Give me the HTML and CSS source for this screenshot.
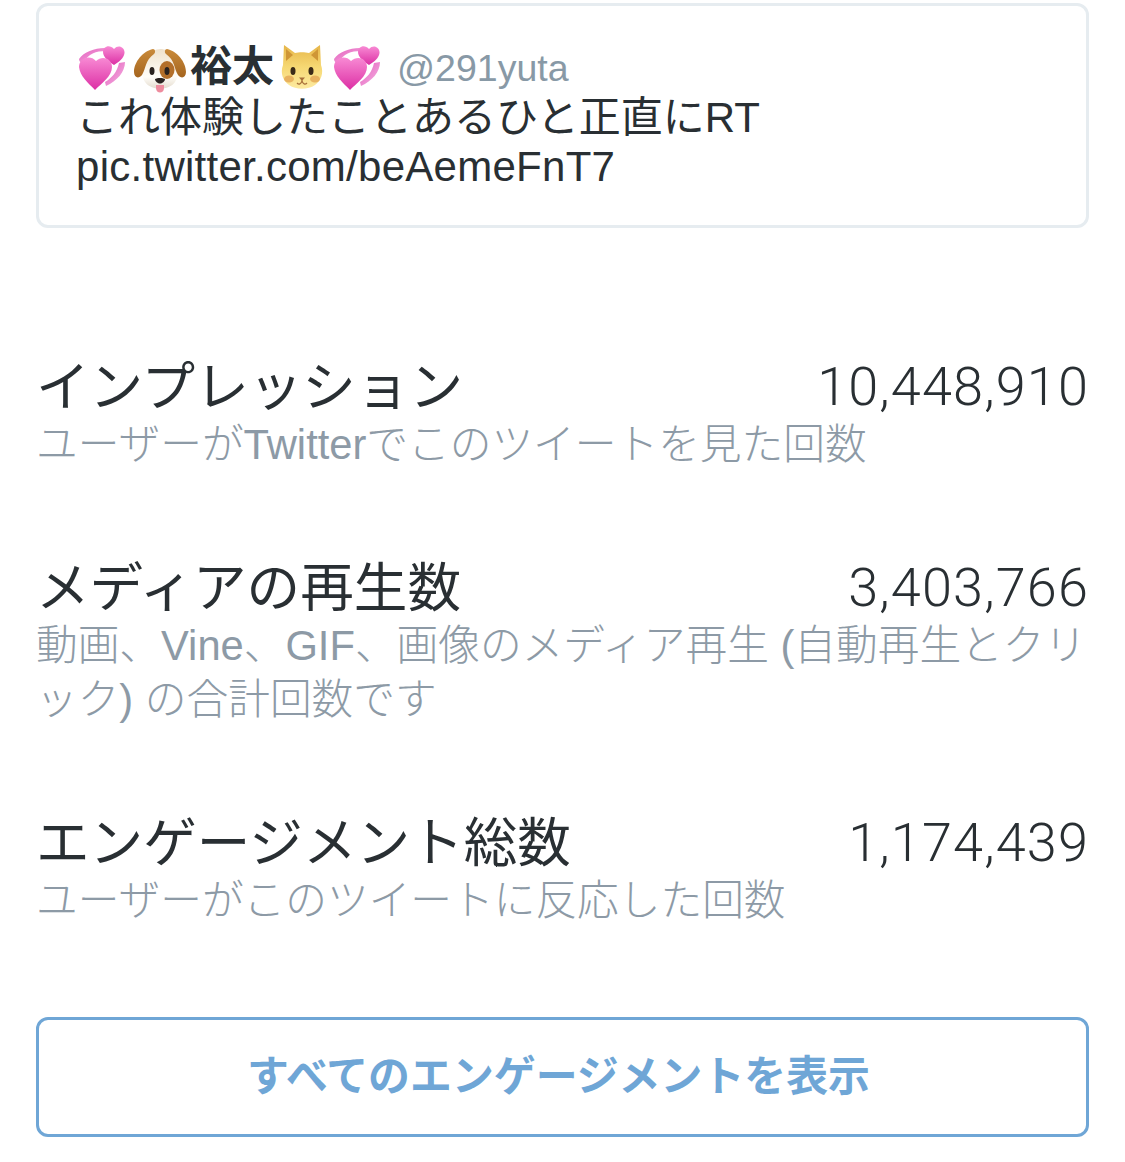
FILE: index.html
```html
<!DOCTYPE html>
<html lang="ja">
<head>
  <meta charset="UTF-8">
  <title>ツイートアクティビティ</title>
  <link rel="stylesheet" href="styles.css">
</head>
<body>
  <svg class="defs" width="0" height="0">
    <defs>
      <linearGradient id="pink" x1="0" y1="0" x2="0" y2="1">
        <stop offset="0" stop-color="#f88ad4"/>
        <stop offset="1" stop-color="#dc2fa4"/>
      </linearGradient>
      <linearGradient id="ribbon" x1="0" y1="0" x2="1" y2="1">
        <stop offset="0" stop-color="#e45cbb"/>
        <stop offset="1" stop-color="#f5b5e4"/>
      </linearGradient>
      <linearGradient id="catfur" x1="0" y1="0" x2="0" y2="1">
        <stop offset="0" stop-color="#e6b548"/>
        <stop offset="0.5" stop-color="#f6d873"/>
        <stop offset="1" stop-color="#fdeaa0"/>
      </linearGradient>
      <linearGradient id="dogfur" x1="0" y1="0" x2="0" y2="1">
        <stop offset="0" stop-color="#efe2cd"/>
        <stop offset="0.7" stop-color="#fffdf8"/>
        <stop offset="1" stop-color="#e4dccf"/>
      </linearGradient>
      <linearGradient id="ear" x1="0" y1="0" x2="0" y2="1">
        <stop offset="0" stop-color="#c98a3a"/>
        <stop offset="1" stop-color="#a5651f"/>
      </linearGradient>
      <symbol id="hearts" viewBox="0 0 46 46">
        <path d="M0 14C5 7 15 3 26 3L27 6C17 6 9 9 5 17C3 19 0 17 0 14Z" fill="url(#ribbon)"/>
        <path d="M46 17C46 27 38 36 27 41L26 37C33 33 38 27 40 18Z" fill="url(#ribbon)"/>
        <path d="M35 20C29 16 24 12 24 7C24 1 31 -1 35 4C39 -1 46 2 45.500 8C45 13 40 17 35 20Z" fill="url(#pink)"/>
        <path d="M16 45C9 38 1 31 0 22C0 13 11 9 17 16C23 10 33 13 33 22C33 31 23 38 16 45Z" fill="url(#pink)"/>
      </symbol>
      <symbol id="dog" viewBox="0 0 52 44">
        <path d="M14 6C20 -2 33 -2 38 6C45 15 46 26 41 33C35 42 17 42 11 33C6 26 7 15 14 6Z" fill="url(#dogfur)"/>
        <path d="M19 0C9 2 0 13 0 23C0 29 5 30 8 26C12 20 11 11 20 5C22 3 21 0 19 0Z" fill="url(#ear)"/>
        <path d="M33 0C43 2 52 13 52 23C52 29 47 30 44 26C40 20 41 11 32 5C30 3 31 0 33 0Z" fill="url(#ear)"/>
        <ellipse cx="33" cy="21" rx="7.500" ry="9" fill="#b36f2a"/>
        <ellipse cx="18" cy="22" rx="2.500" ry="4" fill="#2a2320"/>
        <ellipse cx="33" cy="22" rx="2.500" ry="4" fill="#2a2320"/>
        <path d="M21 30C23 28.500 29 28.500 31 30C31 32.500 28 34.500 26 34.500C24 34.500 21 32.500 21 30Z" fill="#2a2320"/>
        <path d="M22 36H30V39C30 45 22 45 22 39Z" fill="#ee8c9e"/>
      </symbol>
      <symbol id="cat" viewBox="0 0 44 46">
        <path d="M4 0L15 8C19 7 25 7 29 8L40 0L41 20C44 28 41 36 35 40C28 45 16 45 9 40C3 36 0 28 3 20Z" fill="url(#catfur)"/>
        <path d="M6 4L13 10L6 16Z" fill="#cf9636"/>
        <path d="M38 4L31 10L38 16Z" fill="#cf9636"/>
        <ellipse cx="9" cy="34" rx="5" ry="3.500" fill="#e8b25f"/>
        <ellipse cx="35" cy="34" rx="5" ry="3.500" fill="#e8b25f"/>
        <ellipse cx="13" cy="26" rx="2.500" ry="4" fill="#3a2a18"/>
        <ellipse cx="31" cy="26" rx="2.500" ry="4" fill="#3a2a18"/>
        <path d="M19 32.500H25L22 36Z" fill="#a8703a"/>
        <path d="M17 38C19 40 21 39 22 36C23 39 25 40 27 38" fill="none" stroke="#a8703a" stroke-width="1.200"/>
      </symbol>
    </defs>
  </svg>

  <div class="tweet">
    <div class="tweet-head">
      <svg class="emoji"><use href="#hearts"/></svg>
      <svg class="emoji dog"><use href="#dog"/></svg>
      <strong class="name">裕太</strong>
      <svg class="emoji cat"><use href="#cat"/></svg>
      <svg class="emoji"><use href="#hearts"/></svg>
      <span class="handle">@291yuta</span>
    </div>
    <p class="tweet-text">これ体験したことあるひと正直にRT<br><span class="tweet-link">pic.twitter.com/beAemeFnT7</span></p>
  </div>

  <div class="metric metric-first">
    <div class="metric-row">
      <span class="metric-title">インプレッション</span>
      <span class="metric-value">10,448,910</span>
    </div>
    <p class="metric-desc">ユーザーがTwitterでこのツイートを見た回数</p>
  </div>

  <div class="metric metric-second">
    <div class="metric-row">
      <span class="metric-title">メディアの再生数</span>
      <span class="metric-value">3,403,766</span>
    </div>
    <p class="metric-desc">動画、Vine、GIF、画像のメディア再生 (自動再生とクリック) の合計回数です</p>
  </div>

  <div class="metric metric-third">
    <div class="metric-row">
      <span class="metric-title">エンゲージメント総数</span>
      <span class="metric-value">1,174,439</span>
    </div>
    <p class="metric-desc">ユーザーがこのツイートに反応した回数</p>
  </div>

  <a class="button">すべてのエンゲージメントを表示</a>
</body>
</html>
```

FILE: styles.css
```css
body {
  margin: 0;
  padding: 3px 36px 0;
  background: #ffffff;
  color: #292f33;
  font-family: "Liberation Sans", "Noto Sans CJK JP", sans-serif;
}
.defs {
  position: absolute;
}
.tweet {
  box-sizing: border-box;
  height: 225px;
  padding: 37px 37px 0;
  border: 3px solid #e6ecf0;
  border-radius: 12px;
}
.tweet-head {
  display: flex;
  align-items: center;
  height: 50px;
}
.emoji {
  flex: none;
  width: 46px;
  height: 46px;
  margin-left: 3px;
  margin-right: 6px;
}
.emoji.dog {
  width: 52px;
  height: 44px;
  margin-left: 3px;
  margin-right: 4px;
  margin-top: 6px;
}
.emoji.cat {
  width: 44px;
  margin-left: 6px;
  margin-right: 7px;
}
.name {
  margin-bottom: 3px;
  font-size: 42px;
  line-height: 50px;
}
.handle {
  margin-left: 11px;
  font-size: 37.500px;
  color: #8899a6;
}
.tweet-text {
  margin: 0;
  font-size: 42px;
  line-height: 49px;
}
.tweet-link {
  letter-spacing: 0.27px;
}
.metric-first {
  margin-top: 127px;
}
.metric-second {
  margin-top: 84px;
}
.metric-third {
  margin-top: 84px;
}
.metric-row {
  display: flex;
  justify-content: space-between;
  align-items: center;
  height: 60px;
}
.metric-title {
  margin-bottom: 6px;
  font-size: 53.600px;
}
.metric-value {
  margin-top: 2px;
  font-family: Roboto, "Liberation Sans", sans-serif;
  font-size: 54px;
  font-weight: 300;
  letter-spacing: 1.15px;
}
.metric-desc {
  margin: 3px 0 0;
  font-size: 41.700px;
  font-weight: 300;
  line-height: 54px;
  color: #8d9aa6;
}
.button {
  display: block;
  box-sizing: border-box;
  height: 120px;
  margin-top: 89px;
  padding-right: 8px;
  border: 3px solid #6fa6d6;
  border-radius: 12px;
  text-align: center;
  font-size: 41.900px;
  font-weight: bold;
  line-height: 114px;
  color: #6fa6d6;
}
```
